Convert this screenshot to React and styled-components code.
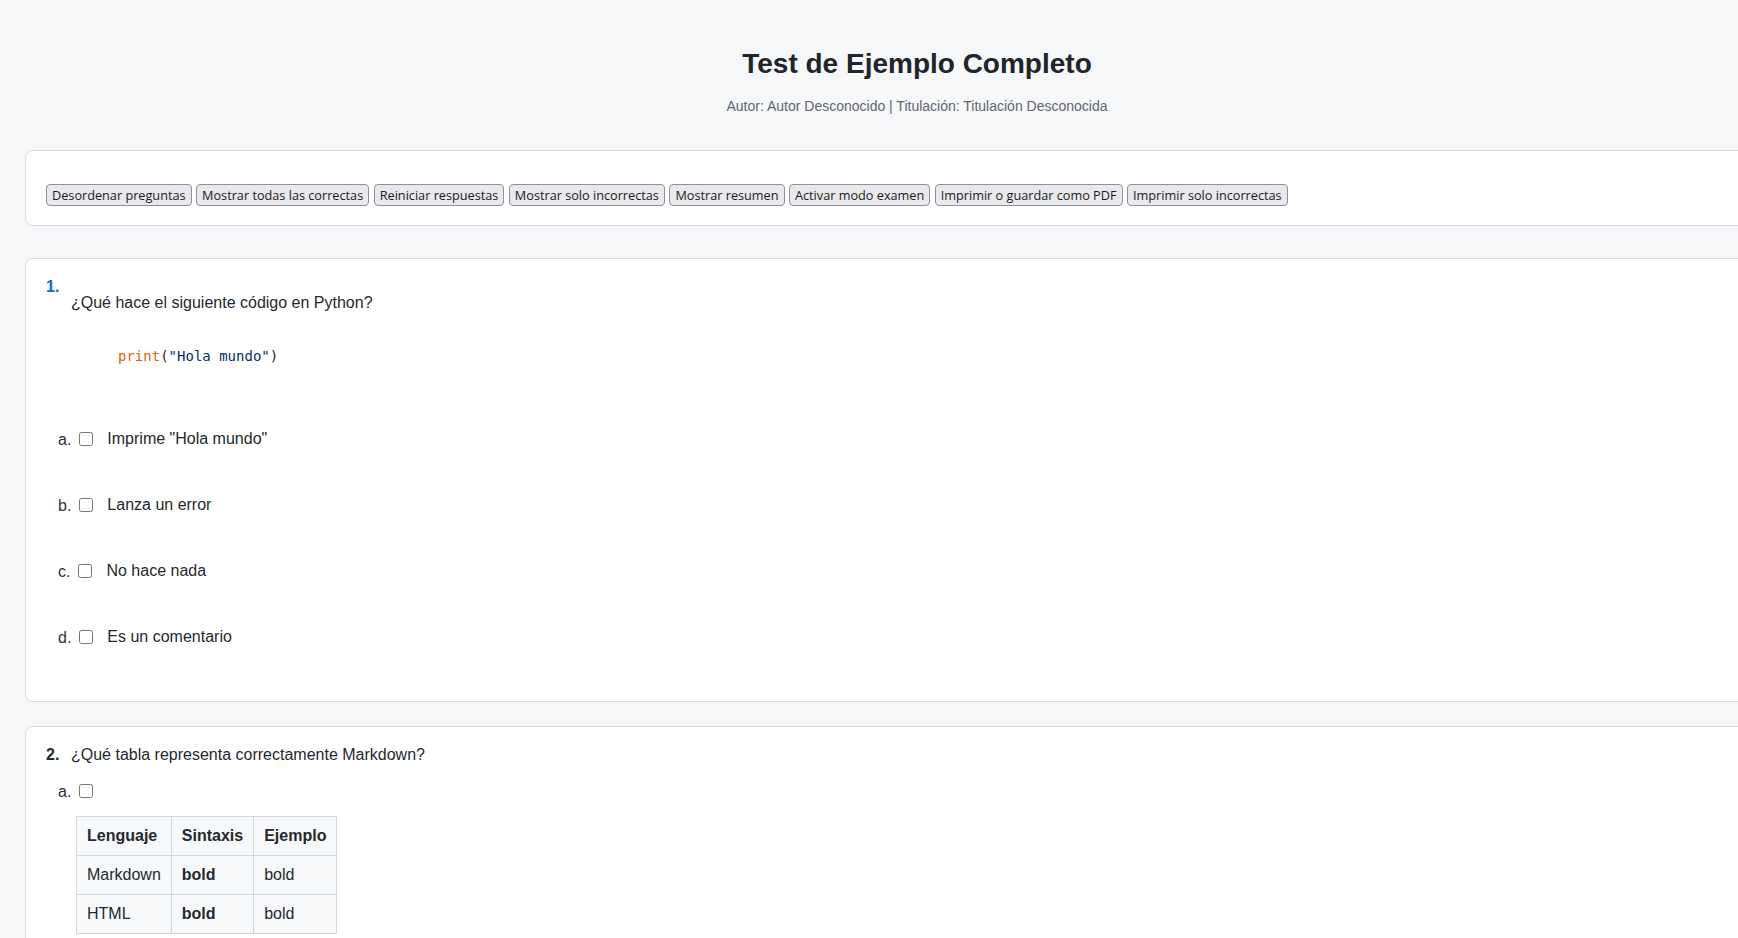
import React from 'react';
import styled, { createGlobalStyle } from 'styled-components';

const GlobalStyle = createGlobalStyle`
    html, body {
        margin: 0;
        padding: 0;
        overflow: hidden;
    }

    body {
        background: #f6f7f9;
        color: #24292f;
        font-family: "Liberation Sans", Arial, sans-serif;
    }
`;

const toolbarActions = [
    'Desordenar preguntas',
    'Mostrar todas las correctas',
    'Reiniciar respuestas',
    'Mostrar solo incorrectas',
    'Mostrar resumen',
    'Activar modo examen',
    'Imprimir o guardar como PDF',
    'Imprimir solo incorrectas',
];

const firstOptions = [
    { letter: 'a.', text: 'Imprime "Hola mundo"' },
    { letter: 'b.', text: 'Lanza un error' },
    { letter: 'c.', text: 'No hace nada' },
    { letter: 'd.', text: 'Es un comentario' },
];

const tableRows = [
    { lang: 'Markdown', syntax: 'bold', example: 'bold' },
    { lang: 'HTML', syntax: 'bold', example: 'bold' },
];

const App = () => {
    return (
        <>
            <GlobalStyle />
            <Page>
                <Header>
                    <Title>Test de Ejemplo Completo</Title>
                    <Meta>Autor: Autor Desconocido | Titulación: Titulación Desconocida</Meta>
                </Header>

                <Toolbar>
                    {toolbarActions.map((label) => (
                        <ToolButton key={label} type="button">
                            {label}
                        </ToolButton>
                    ))}
                </Toolbar>

                <QuestionCard>
                    <QuestionHead>
                        <Number $active>1.</Number>
                        <QuestionBody>
                            <Prompt $spaced>¿Qué hace el siguiente código en Python?</Prompt>
                            <CodeBlock>
                                <Builtin>print</Builtin>(<Str>"Hola mundo"</Str>)
                            </CodeBlock>
                        </QuestionBody>
                    </QuestionHead>
                    <OptionList>
                        {firstOptions.map((opt) => (
                            <Option key={opt.letter}>
                                <OptionRow>
                                    <Letter>{opt.letter}</Letter>
                                    <Check type="checkbox" />
                                    <OptionText>{opt.text}</OptionText>
                                </OptionRow>
                            </Option>
                        ))}
                    </OptionList>
                </QuestionCard>

                <QuestionCard>
                    <QuestionHead>
                        <Number>2.</Number>
                        <QuestionBody>
                            <Prompt>¿Qué tabla representa correctamente Markdown?</Prompt>
                        </QuestionBody>
                    </QuestionHead>
                    <OptionList>
                        <Option>
                            <OptionRow>
                                <Letter>a.</Letter>
                                <Check type="checkbox" />
                            </OptionRow>
                            <Table>
                                <thead>
                                    <tr>
                                        <Th>Lenguaje</Th>
                                        <Th>Sintaxis</Th>
                                        <Th>Ejemplo</Th>
                                    </tr>
                                </thead>
                                <tbody>
                                    {tableRows.map((row) => (
                                        <tr key={row.lang}>
                                            <Td>{row.lang}</Td>
                                            <Td><strong>{row.syntax}</strong></Td>
                                            <Td>{row.example}</Td>
                                        </tr>
                                    ))}
                                </tbody>
                            </Table>
                        </Option>
                    </OptionList>
                </QuestionCard>
            </Page>
        </>
    );
};

const Page = styled.div`
    box-sizing: border-box;
    width: 1834px;
    padding: 47px 25px 40px;
`;

const Header = styled.header`
    text-align: center;
    margin-bottom: 34px;
`;

const Title = styled.h1`
    margin: 0;
    font-size: 28px;
    line-height: 33.6px;
    font-weight: 700;
    color: #212529;
`;

const Meta = styled.p`
    margin: 15px 0 0;
    font-size: 14px;
    line-height: 20px;
    color: #5f6670;
`;

const Card = styled.section`
    background: #ffffff;
    border: 1px solid #d9dde3;
    border-radius: 8px;
`;

const Toolbar = styled(Card)`
    display: flex;
    flex-wrap: wrap;
    gap: 4.5px;
    padding: 33px 20px 19px;
    margin-bottom: 32px;
`;

const ToolButton = styled.button`
    height: 22px;
    padding: 1px 5px;
    background: #e9e9ed;
    color: #1b1b1b;
    border: 1px solid #8f8f9d;
    border-radius: 4px;
    font-family: "Open Sans", sans-serif;
    font-size: 12.7px;
    line-height: 18px;
    cursor: pointer;

    &:hover {
        background: #d0d0d7;
    }
`;

const QuestionCard = styled(Card)`
    padding: 16px 20px 31px;
    margin-bottom: 24px;
`;

const QuestionHead = styled.div`
    display: flex;
    align-items: flex-start;
`;

const Number = styled.span`
    flex: none;
    width: 25px;
    font-size: 16px;
    line-height: 24px;
    font-weight: 700;
    color: ${(p) => (p.$active ? '#0b6bd8' : '#24292f')};
`;

const QuestionBody = styled.div`
    flex: 1;
`;

const Prompt = styled.p`
    margin: ${(p) => (p.$spaced ? '16px 0 0' : '0')};
    font-size: 16px;
    line-height: 24px;
`;

const CodeBlock = styled.pre`
    margin: 15px 0 18px 31px;
    padding: 16px;
    font-family: "DejaVu Sans Mono", "Liberation Mono", monospace;
    font-size: 14px;
    line-height: 20px;
    color: #24292f;
`;

const Builtin = styled.span`
    color: #e36209;
`;

const Str = styled.span`
    color: #032f62;
`;

const OptionList = styled.div`
    margin-top: 6px;
`;

const Option = styled.div`
    padding: 5px 0 5px 12px;
`;

const OptionRow = styled.div`
    display: flex;
    align-items: center;
`;

const Letter = styled.span`
    margin-top: 2px;
    font-size: 16px;
    line-height: 24px;
    color: #333;
`;

const Check = styled.input`
    flex: none;
    margin: 0 0 0 8px;
    width: 14px;
    height: 14px;
`;

const OptionText = styled.p`
    margin: 16px 0 16px 14px;
    font-size: 16px;
    line-height: 24px;
`;

const Table = styled.table`
    margin: 12px 0 0 18px;
    border-collapse: collapse;
    font-size: 16px;
    line-height: 24px;
`;

const Th = styled.th`
    padding: 7px 10px;
    border: 1px solid #d0d7de;
    background: #f6f8fa;
    text-align: left;
    font-weight: 700;
`;

const Td = styled.td`
    padding: 7px 10px;
    border: 1px solid #d0d7de;
    background: #f6f8fa;
`;

export default App;
